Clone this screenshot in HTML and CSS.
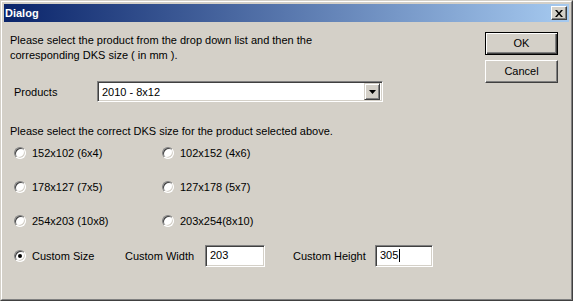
FILE: index.html
```html
<!DOCTYPE html>
<html>
<head>
<meta charset="utf-8">
<link rel="stylesheet" href="styles.css">
</head>
<body>
<div class="window">
  <div class="frame">
    <div class="titlebar">
      <span class="title">Dialog</span>
      <span class="close-btn"><svg width="8" height="7" viewBox="0 0 8 7"><path d="M0 0h2l2 2.5L6 0h2L5 3.5 8 7H6L4 4.5 2 7H0l3-3.5z" fill="#000"/></svg></span>
    </div>
    <div class="client">
      <div class="main">
        <p class="intro">Please select the product from the drop down list and then the<br>corresponding DKS size ( in mm ).</p>
        <div class="products-row">
          <span class="label">Products</span>
          <div class="combo">
            <span class="combo-value">2010 - 8x12</span>
            <span class="combo-btn"><svg width="7" height="4" viewBox="0 0 7 4"><path d="M0 0h7L3.5 4z" fill="#000"/></svg></span>
          </div>
        </div>
        <p class="instruction">Please select the correct DKS size for the product selected above.</p>
        <div class="radio-grid">
          <label class="radio"><span class="dot"></span>152x102 (6x4)</label>
          <label class="radio"><span class="dot"></span>102x152 (4x6)</label>
          <label class="radio"><span class="dot"></span>178x127 (7x5)</label>
          <label class="radio"><span class="dot"></span>127x178 (5x7)</label>
          <label class="radio"><span class="dot"></span>254x203 (10x8)</label>
          <label class="radio"><span class="dot"></span>203x254(8x10)</label>
        </div>
        <div class="custom-row">
          <label class="radio custom-radio"><span class="dot checked"></span>Custom Size</label>
          <span class="field-label w-label">Custom Width</span>
          <span class="textbox w-box">203</span>
          <span class="field-label h-label">Custom Height</span>
          <span class="textbox h-box">305<span class="caret"></span></span>
        </div>
      </div>
      <div class="side">
        <div class="btn default"><span class="btn-inner">OK</span></div>
        <div class="btn"><span class="btn-inner">Cancel</span></div>
      </div>
    </div>
  </div>
</div>
</body>
</html>
```
FILE: styles.css
```css
* { box-sizing: border-box; }
html, body { margin: 0; padding: 0; background: #d4d0c8; }
body {
  font-family: "Liberation Sans", Arial, sans-serif;
  font-size: 11px;
  color: #000;
}
.window {
  width: 573px;
  height: 301px;
  border: 1px solid;
  border-color: #d4d0c8 #404040 #404040 #d4d0c8;
  background: #d4d0c8;
}
.frame {
  height: 100%;
  border: 1px solid;
  border-color: #fff #808080 #808080 #fff;
  padding: 2px;
  display: flex;
  flex-direction: column;
}
.titlebar {
  height: 18px;
  background: linear-gradient(to right, #0a246a, #a6caf0);
  display: flex;
  align-items: center;
  justify-content: space-between;
  padding: 0 2px 0 1px;
}
.title {
  color: #fff;
  font-weight: bold;
  font-size: 11px;
}
.close-btn {
  width: 16px;
  height: 14px;
  background: #d4d0c8;
  border: 1px solid;
  border-color: #fff #404040 #404040 #fff;
  box-shadow: inset -1px -1px #808080;
  display: flex;
  align-items: center;
  justify-content: center;
  padding-right: 1px;
}
.client {
  flex: 1;
  display: flex;
  padding: 0 11px 0 6px;
}
.main { flex: 1; }
.intro {
  margin: 11px 0 0 0;
  line-height: 15px;
}
.products-row {
  display: flex;
  align-items: center;
  margin-top: 18px;
  height: 21px;
}
.label {
  width: 87px;
  padding-left: 4px;
}
.combo {
  width: 286px;
  height: 21px;
  background: #fff;
  border: 1px solid;
  border-color: #808080 #fff #fff #808080;
  box-shadow: inset 1px 1px #404040, inset -1px -1px #d4d0c8;
  display: flex;
  align-items: center;
  justify-content: space-between;
  padding: 2px 2px 2px 4px;
}
.combo-btn {
  width: 16px;
  height: 17px;
  background: #d4d0c8;
  border: 1px solid;
  border-color: #d4d0c8 #404040 #404040 #d4d0c8;
  box-shadow: inset 1px 1px #fff, inset -1px -1px #808080;
  display: flex;
  align-items: center;
  justify-content: center;
}
.instruction {
  margin: 22px 0 0 0;
  line-height: 15px;
}
.radio-grid {
  display: grid;
  grid-template-columns: 148px 150px;
  grid-auto-rows: 16px;
  row-gap: 18px;
  margin-top: 6px;
  padding-left: 4px;
}
.radio {
  display: flex;
  align-items: center;
  gap: 6px;
}
.dot {
  width: 12px;
  height: 12px;
  border-radius: 50%;
  background: #fff;
  border: 1px solid;
  border-color: #808080 #fff #fff #808080;
  box-shadow: inset 1px 1px #404040, inset -1px -1px #d4d0c8;
  position: relative;
  flex: none;
}
.dot.checked::after {
  content: "";
  position: absolute;
  left: 3px;
  top: 3px;
  width: 4px;
  height: 4px;
  border-radius: 50%;
  background: #000;
}
.custom-row {
  display: flex;
  align-items: center;
  height: 22px;
  margin-top: 16px;
  padding-left: 4px;
}
.custom-radio { width: 111px; }
.field-label { width: 80px; }
.h-label { width: 82px; margin-left: 28px; }
.textbox {
  height: 22px;
  background: #fff;
  border: 1px solid;
  border-color: #808080 #fff #fff #808080;
  box-shadow: inset 1px 1px #404040, inset -1px -1px #d4d0c8;
  padding: 3px 4px;
  display: flex;
  align-items: flex-start;
}
.w-box { width: 60px; }
.h-box { width: 58px; }
.caret {
  display: inline-block;
  width: 1px;
  height: 13px;
  background: #000;
  margin-left: 1px;
}
.side {
  width: 73px;
  padding-top: 10px;
  display: flex;
  flex-direction: column;
  gap: 5px;
}
.btn {
  height: 23px;
  border: 1px solid;
  border-color: #fff #404040 #404040 #fff;
  box-shadow: inset -1px -1px #808080;
  display: flex;
  align-items: center;
  justify-content: center;
}
.btn.default {
  border: 1px solid #000;
  box-shadow: inset 1px 1px #fff, inset -1px -1px #404040, inset -2px -2px #808080;
}
.btn-inner { line-height: 13px; }
```
